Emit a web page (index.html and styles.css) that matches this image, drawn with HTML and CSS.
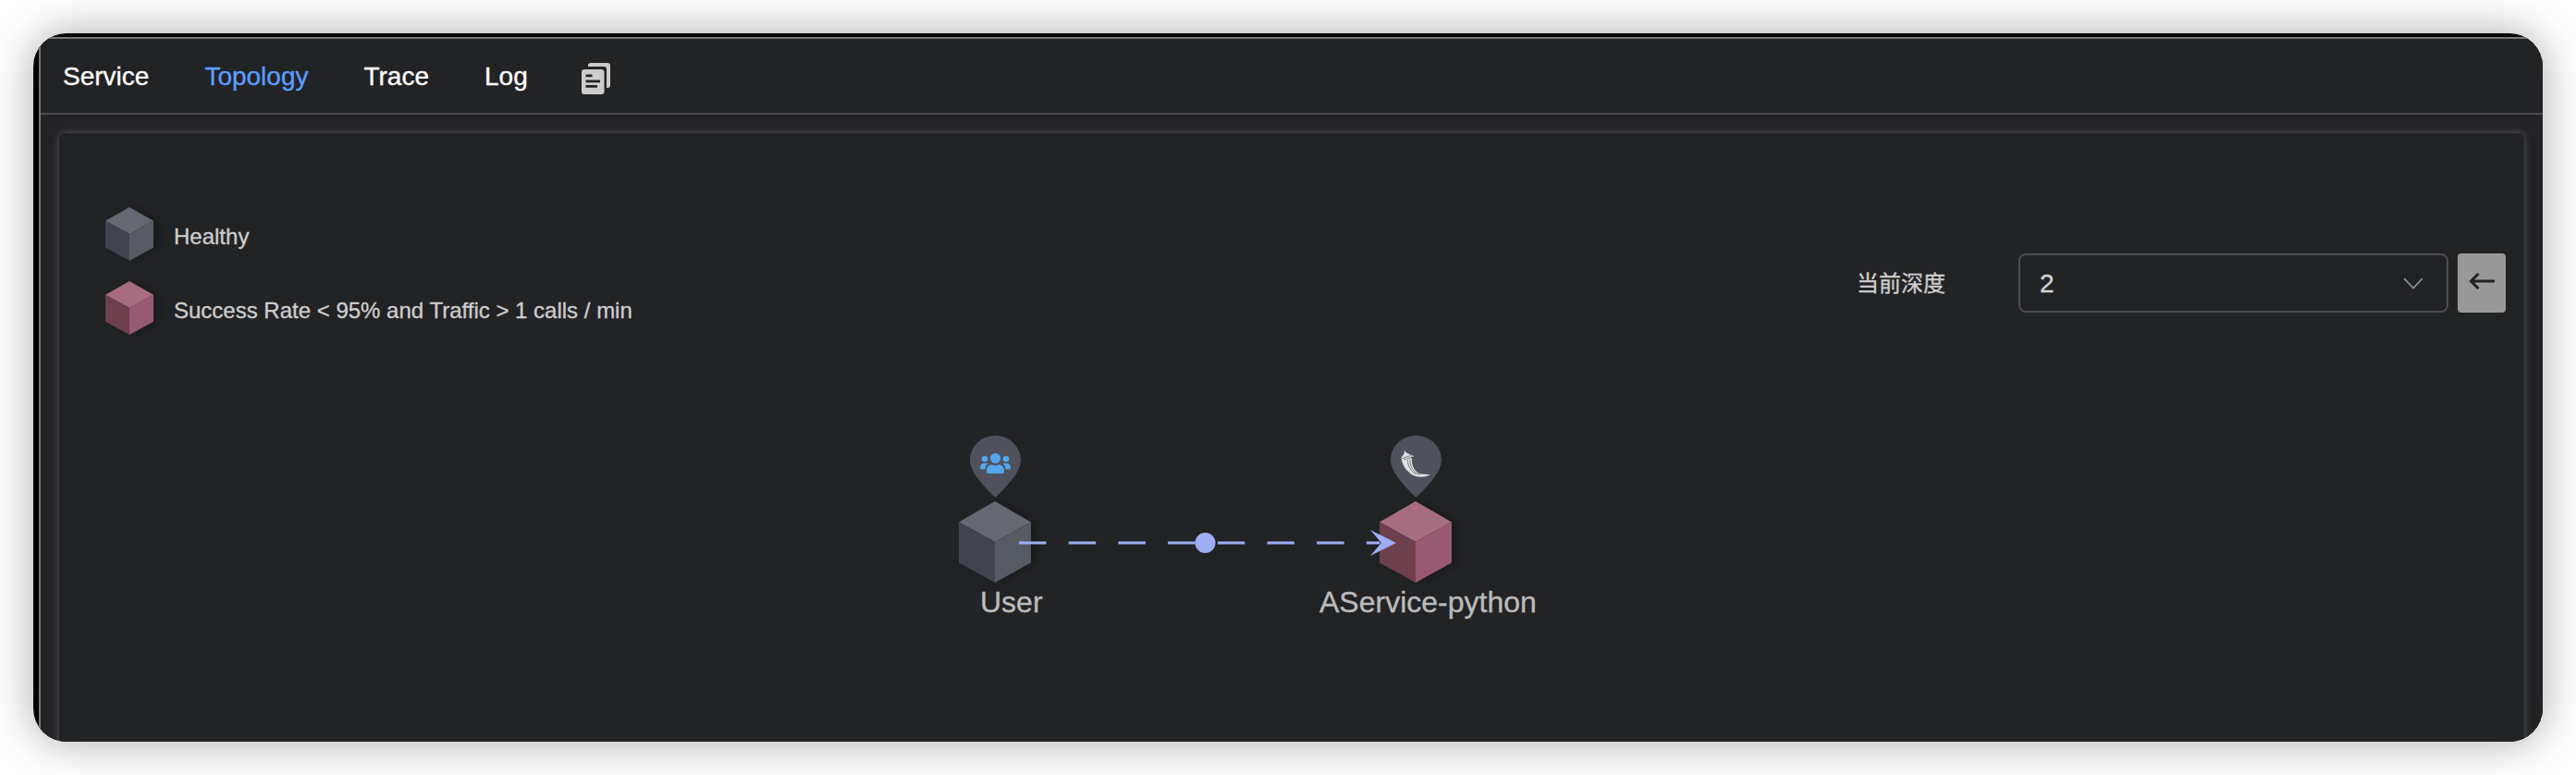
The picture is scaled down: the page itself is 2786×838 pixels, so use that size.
FILE: index.html
```html
<!DOCTYPE html>
<html lang="zh-CN">
<head>
<meta charset="utf-8">
<title>Topology</title>
<link rel="stylesheet" href="styles.css">
</head>
<body>
<svg class="defs" width="0" height="0" aria-hidden="true">
  <symbol id="cube" viewBox="0 0 78 88" preserveAspectRatio="none">
    <path class="top" d="M39 0 78 22.500 39 44 0 22.500Z"/>
    <path class="left" d="M0 22.500 39 44V88L0 66.500Z"/>
    <path class="right" d="M78 22.500 39 44V88L78 66.500Z"/>
  </symbol>
  <symbol id="pin" viewBox="0 0 55 67">
    <path d="M27.500 0C12.300 0 0 12 0 26.500 0 40 16 55.500 27.500 67 39 55.500 55 40 55 26.500 55 12 42.700 0 27.500 0Z"/>
  </symbol>
</svg>
<div class="window">
  <div class="page">
    <nav class="tabs">
      <a class="tab">Service</a>
      <a class="tab active">Topology</a>
      <a class="tab">Trace</a>
      <a class="tab">Log</a>
      <svg class="copy" viewBox="0 0 31 34">
        <path d="M7 4V3a3 3 0 0 1 3-3h18a3 3 0 0 1 3 3v21a3 3 0 0 1-3 3h-1V7a3 3 0 0 0-3-3Z"/>
        <path fill-rule="evenodd" d="M3 7h18.500a3 3 0 0 1 3 3v21a3 3 0 0 1-3 3H3a3 3 0 0 1-3-3V10a3 3 0 0 1 3-3ZM4.500 12.500v2.700h7v-2.700ZM4.500 18.500v2.700h15.500v-2.700ZM4.500 24v2.700h12.500V24Z"/>
      </svg>
    </nav>
    <main class="panel">
      <div class="toolbar">
        <ul class="legend">
          <li><svg class="cube healthy"><use href="#cube"/></svg><span>Healthy</span></li>
          <li><svg class="cube error"><use href="#cube"/></svg><span>Success Rate &lt; 95% and Traffic &gt; 1 calls / min</span></li>
        </ul>
        <div class="depth">
          <label>当前深度</label>
          <div class="select"><span>2</span>
            <svg class="chevron" viewBox="0 0 22 13"><path d="M1 1 11 11.500 21 1"/></svg>
          </div>
          <button class="back"><svg viewBox="0 0 28 20"><path d="M28 10H3M10.500 2 2.500 10 10.500 18"/></svg></button>
        </div>
      </div>
      <div class="canvas">
        <div class="node user">
          <svg class="pin"><use href="#pin"/></svg>
          <svg class="glyph people" viewBox="0 0 33 22">
            <circle cx="16.500" cy="5.500" r="5.500"/><circle cx="5" cy="6.200" r="3.300"/><circle cx="28" cy="6.200" r="3.300"/>
            <path d="M7 20V18.500c0-3.500 2.500-6 6-6q3.500 1.300 7 0c3.500 0 6 2.500 6 6V20q0 2-2 2H9q-2 0-2-2Z"/>
            <path d="M0 16V15.500c0-2.800 2-4.500 4-4.500h4.500Q5.500 13.500 5.300 17.500H1.500Q0 17.500 0 16ZM33 16V15.500c0-2.800-2-4.500-4-4.500h-4.500q3 2.500 3.200 6.500h3.800Q33 17.500 33 16Z"/>
          </svg>
          <svg class="cube healthy"><use href="#cube"/></svg>
          <span class="name">User</span>
        </div>
        <div class="node service">
          <svg class="pin"><use href="#pin"/></svg>
          <svg class="glyph flask" viewBox="0 0 33 29">
            <path d="M.5 7.500 3.500 4 4 0 6 2.500 14.500 6.500 10.500 7 12 9.500C11.500 15 14 22 20.500 25.500L27 25.800 32 26.500C27 29 17 30 11 25.500 5 21 1 15 .5 7.500Z"/>
            <path class="shade" d="M1.500 8.500 11 5.500M3 10 10.500 8M7.500 10.500C7.500 17 11 23 17 26M10 10C9.800 17 13 23 20 26.500"/>
          </svg>
          <svg class="cube error"><use href="#cube"/></svg>
          <span class="name">AService-python</span>
        </div>
        <svg class="link" viewBox="0 0 408 30">
          <path class="dash" d="M0 15H390"/>
          <circle cx="201.500" cy="15" r="11"/>
          <path d="M380 1 408 15 380 29 392 15Z"/>
        </svg>
      </div>
    </main>
  </div>
</div>
</body>
</html>
```
FILE: styles.css
```css
* { box-sizing: border-box; }
body {
  margin: 0;
  padding: 36px;
  height: 838px;
  overflow: hidden;
  background: #fff;
  color: #ccc;
  font-family: "Liberation Sans", "Noto Sans CJK SC", sans-serif;
  -webkit-text-stroke: .35px currentColor;
}
.defs { position: absolute; }
.window {
  height: 766px;
  padding: 4px 0 0 6px;
  border-radius: 36px;
  overflow: hidden;
  background: #050505;
  box-shadow: 0 0 48px rgba(0, 0, 0, .34);
}
.page {
  height: 762px;
  border-top: 2px solid #77787a;
  border-left: 2px solid #77787a;
  background: #222325;
}
.tabs {
  height: 82px;
  padding-left: 24px;
  display: flex;
  align-items: center;
  gap: 60px;
  border-bottom: 2px solid #4b4b50;
  font-size: 28px;
  color: #fff;
}
.tab { padding-top: 1px; line-height: 79px; }
.tab.active { color: #5c9dff; }
.copy { width: 31px; height: 34px; margin: 6px 0 0 -2px; fill: #ccc; }
.panel {
  height: 720px;
  margin: 20px 20px 0;
  border-radius: 6px;
  box-shadow: 0 0 8px #58595b;
  background: #222325;
}
.toolbar {
  height: 300px;
  padding: 80px 20px 0 50px;
  display: flex;
  justify-content: space-between;
}
.legend { margin: 0; padding: 0; list-style: none; font-size: 24px; }
.legend li { display: flex; height: 58px; margin-bottom: 22px; gap: 22px; }
.legend .cube { width: 52px; height: 58px; }
.legend span { padding-top: 18px; line-height: 28px; }
.cube { display: block; overflow: visible; filter: drop-shadow(6px 0 5px rgba(0, 0, 0, .25)); }
.healthy { --top: #656871; --left: #41434f; --right: #565a62; }
.error { --top: #a56d7f; --left: #6e3f4d; --right: #985973; }
.top { fill: var(--top); }
.left { fill: var(--left); }
.right { fill: var(--right); }
.depth { display: flex; height: 64px; margin-top: 50px; align-items: center; font-size: 24px; }
.depth label { padding-bottom: 3px; }
.select {
  width: 465px;
  height: 64px;
  margin: 0 10px 0 79px;
  padding: 0 25px 0 21px;
  display: flex;
  align-items: center;
  justify-content: space-between;
  border: 2px solid #4c4d4f;
  border-radius: 8px;
  font-size: 28px;
  color: #cfd3dc;
}
.select span { padding-top: 1px; }
.chevron { width: 22px; height: 13px; fill: none; stroke: #8d9095; stroke-width: 1.8; }
.back {
  width: 52px;
  height: 64px;
  padding: 0 0 4px;
  display: flex;
  align-items: center;
  justify-content: center;
  border: 0;
  border-radius: 4px;
  background: #999;
}
.back svg { width: 28px; height: 20px; fill: none; stroke: #222; stroke-width: 3; }
.canvas { position: relative; height: 330px; }
.node { position: absolute; top: 27px; width: 78px; }
.user { left: 973px; }
.service { left: 1428px; }
.pin { display: block; width: 55px; height: 67px; margin: 0 0 4px 12px; fill: #4f525c; }
.node .cube { width: 78px; height: 88px; }
.glyph { position: absolute; left: 23px; top: 19px; width: 33px; overflow: visible; }
.people { height: 22px; fill: #53a7ec; }
.flask { top: 16px; height: 29px; fill: #e0e0e0; }
.shade { fill: none; stroke: #4f525c; stroke-width: .7; }
.name { display: block; margin-top: 3px; font-size: 32px; line-height: 36px; color: #bbb; white-space: nowrap; }
.user .name { margin-left: 23px; }
.service .name { margin-left: -65px; }
.link { position: absolute; left: 1038px; top: 128px; width: 408px; height: 30px; fill: #9eaef5; }
.dash { stroke: #9eaef5; stroke-width: 3; stroke-dasharray: 29.500 24.200; }
```
